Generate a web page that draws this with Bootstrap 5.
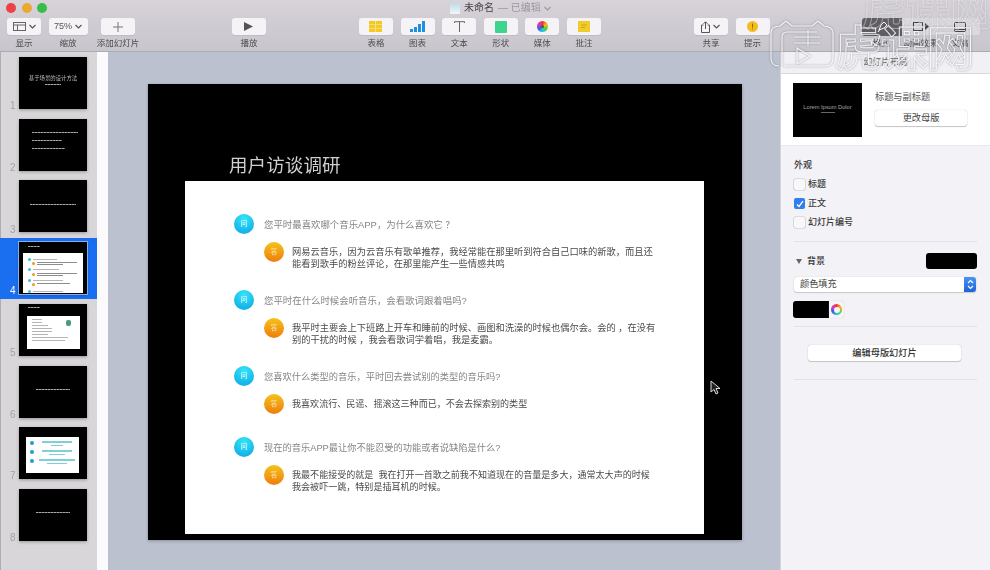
<!doctype html>
<html lang="zh">
<head>
<meta charset="utf-8">
<link href="https://cdn.jsdelivr.net/npm/bootstrap@5.3.0/dist/css/bootstrap.min.css" rel="stylesheet">
<style>
html,body{margin:0;height:570px;overflow:hidden}
body{font-family:"Liberation Sans","Noto Sans CJK SC",sans-serif;background:#bcc1cf;color:#444}
.app-root{width:990px;height:570px;position:relative;overflow:hidden}
.soft{filter:blur(.5px)}
/* toolbar */
.tbar{height:52px;background:linear-gradient(#d8d3d9,#cfcbd2 50%,#c8c6cd);border-bottom:1px solid #adabb2;position:relative}
.tlights{height:18px;padding:3px 0 0 6px;gap:5.5px}
.tl-dot{width:10px;height:10px;border-radius:50%}
.tl-r{background:#ee4049}.tl-y{background:#eaa92e}.tl-g{background:#35bd46}
.wtitle{position:absolute;left:450px;top:1px;font-size:10px;line-height:14px;color:#444;gap:4px}
.wtitle .faint{color:#9a98a0;display:flex;align-items:center;gap:3px}
.doc-ic{width:10px;height:11px;background:linear-gradient(#bcdbe9,#f4f6f7);border-radius:1px}
.tools{padding-left:7px}
.titem{width:34px;display:flex;flex-direction:column;align-items:center;margin-right:7.6px;flex:none}
.tbtn{width:34px;height:17px;background:#f5f3f6;border-radius:3px;box-shadow:0 1px 0 #bfbdc3;display:flex;align-items:center;justify-content:center;gap:3px;font-size:9px;font-weight:500;color:#555}
.tlabel{font-size:8.5px;line-height:12px;margin-top:2px;color:#4c4c4c;white-space:nowrap}
.w39{width:39px}
.m-a{margin-right:13.4px}
.m-b{margin-right:93px}
.sp-play{width:89.4px;flex:none}
.m-c{margin-right:93px}
.m-d{margin-right:92px}
.segwrap{display:flex;height:17px;width:118px;background:#dcdadf;border-radius:3px;flex:none;align-items:center}
.segon{width:40px;height:18px;background:#605e63;border-radius:3px 0 0 3px;display:flex;align-items:center;justify-content:center}
.segoff{width:39px;display:flex;justify-content:center}
.seglabels{display:flex;width:118px;font-size:8.5px;line-height:12px;margin-top:2px;color:#4c4c4c}
.seglabels span{width:40px;text-align:center;white-space:nowrap}
/* body */
.mainrow{height:518px}
.thumbs{width:97px;flex:none;background:#d9d6da;padding-top:.5px;border-left:1px solid #aeadb2}
.strip{width:11px;flex:none;background:#fbfbfd}
.trow{height:61.7px;position:relative;padding:4.6px 0 0 19px;margin-left:-1px}
.trow.sel{background:#1a6ef0}
.tnum{position:absolute;left:10px;bottom:3px;font-size:10px;line-height:10px;color:#a3a2a6}
.sel .tnum{color:#fff}
.mini{width:68px;height:52px;background:#000;box-shadow:0 1px 3px rgba(0,0,0,.3);display:flex;flex-direction:column;overflow:hidden;position:relative}
.sel .mini{outline:1px solid #7fb0f0}
.mini-c{align-items:center;justify-content:center;padding-bottom:6px}
.mini-h{font-size:5.4px;line-height:7px;color:#bbb;white-space:nowrap}
.bar{height:1px;background:repeating-linear-gradient(90deg,#a8a8a8 0 2px,#666 2px 3px);margin-top:2px}
.blk{display:flex;flex-direction:column;gap:7px;padding:13px 0 0 13px}
.w46{width:46px}.w44{width:44px}.w30{width:30px}.w33{width:33px}.w34{width:34px}.w20{width:20px}.w16{width:16px}.w12{width:12px}.w40{width:40px}.w36{width:36px}.w24{width:24px}.w26{width:26px}.w10{width:10px}
.mt0{margin-top:0}
.mini-top{height:11px;padding:4px 0 0 9px}
.mini-top5{height:8px;padding-top:3px}
.mw{background:#fff;margin-left:4px;width:60px;height:40px;padding:4px 3px 0 5px;display:flex;flex-direction:column;gap:1px}
.mq{display:flex;align-items:center;gap:2px;height:4px}
.ma{display:flex;align-items:flex-start;gap:2px;padding-left:4px;height:5px}
.dotb{width:3px;height:3px;border-radius:50%;background:#2dbfe8;flex:none}
.doto{width:3px;height:3px;border-radius:50%;background:#ee9a1e;flex:none}
.lg{height:1px;background:#b5b5b5}
.ld{height:1px;background:#8c8c8c;margin-bottom:1px}
.mw5{background:#fff;margin:4px 0 0 8px;width:53px;height:33px;padding:3px 5px;position:relative;display:flex;flex-direction:column;gap:2px}
.grn{position:absolute;right:9px;top:4px;width:5px;height:6px;border-radius:2px;background:#4a9a82}
.mw7{background:#fff;margin:10px 0 0 7px;width:53px;height:36px;padding:4px 4px;display:flex;flex-direction:column;gap:4px}
.m7r{display:flex;gap:4px}
.m7t{display:flex;flex-direction:column;align-items:center;gap:2px;flex:1}
.lt{height:1.5px;background:#7fd0d6}
.dot7{width:4px;height:4px;border-radius:50%;background:#1e9fd8;flex:none;margin-top:0}
/* canvas */
.stage{flex:1 1 auto;background:#bcc1cf;padding:32px 0 0 40px;position:relative}
.slide{width:594px;height:456px;background:#000;padding-top:97px;position:relative;box-shadow:0 1px 3px rgba(0,0,0,.25)}
.s-title{position:absolute;left:81px;top:69px;font-size:18.5px;line-height:26px;color:#cfcfcf;letter-spacing:.1px}
.s-card{margin-left:37px;width:519px;height:353px;background:#fff;padding-top:33px}
.q-row{display:flex;align-items:center;padding-left:49px;height:20px}
.ic{width:20px;height:20px;border-radius:50%;color:#fff;font-size:7px;display:flex;align-items:center;justify-content:center;flex:none}
.ic-q{background:radial-gradient(circle at 50% 25%,#35e6f4,#14b2ea 75%)}
.ic-a{background:linear-gradient(#f5c21a,#ee7d0c);color:#fbe3a8}
.q-txt{margin-left:10px;padding-top:3px;font-size:9.42px;color:#858585;white-space:nowrap}
.q-nar{font-size:9.26px}
.a-row{display:flex;padding-left:79px;margin-top:8px;height:48px}
.a-row.n2{height:43px}
.a-txt{margin-left:8px;font-size:9.25px;line-height:11.7px;color:#4a4a4a;padding-top:5px;white-space:nowrap}
.a-nar{font-size:9.05px}
/* panel */
.panel{width:210px;flex:none;background:#f3f2f7;border-left:1px solid #d6d5da;font-size:9px;color:#444}
.p-tab{height:22px;border-bottom:1px solid #d9d8dd;background:#f1f0f4;text-align:center;line-height:20px;color:#6a6a6a;font-size:8.8px}
.p-head{height:72px;background:#fff;border-bottom:1px solid #e9e8ec;padding:9px 0 0 12px;gap:13px}
.p-thumb{width:69px;height:54px;background:#000;color:#aaa;display:flex;flex-direction:column;align-items:center;justify-content:center;font-size:5.7px;line-height:8px;flex:none;padding-bottom:5px;white-space:nowrap}
.p-thumb i{display:block;width:14px;height:1px;background:#666;margin-top:1px}
.p-nm{font-size:9.2px;line-height:12px;margin-top:8px;color:#555}
.p-btn{width:92px;height:16px;margin-top:7px;background:#fff;border-radius:3px;box-shadow:0 0 1px #aaa,0 1px 1px #c6c6c6;text-align:center;font-size:9.2px;line-height:16px;color:#444}
.p-sec{padding:13px 13px 0 13px;height:95px}
.p-h{font-weight:500;font-size:9px;line-height:12px;color:#333}
.p-chk{display:flex;align-items:center;gap:3px;height:19px;font-size:9px;font-weight:500;color:#3a3a3a}
.p-h + .p-chk{margin-top:4px}
.cbx{width:11px;height:11px;border-radius:2px;background:#f8f7fa;box-shadow:0 0 0 .6px #c4c3c8;flex:none;display:flex;align-items:center;justify-content:center}
.cbx.on{background:#2f80ec;box-shadow:none}
.p-hr{height:1px;background:#e3e2e7;margin:0 13px}
.p-bgrow{display:flex;align-items:center;justify-content:space-between;height:16px;margin:11px 13px 0 15px}
.tri{width:0;height:0;border-left:3.5px solid transparent;border-right:3.5px solid transparent;border-top:5px solid #666;margin-right:5px}
.sw{width:51px;height:16px;background:#000;border-radius:3px}
.p-sel{display:flex;margin:8px 13px 0 13px;height:15px;width:182px;background:#fff;border-radius:3px;box-shadow:0 0 1px #aaa,0 1px 1px #ccc;justify-content:space-between;line-height:15px;padding-left:6px;font-size:9.2px;color:#444}
.stp{width:12px;height:15px;background:linear-gradient(#4b93f0,#1c63d8);border-radius:0 3px 3px 0;display:flex;align-items:center;justify-content:center}
.p-col{display:flex;margin:9px 0 8px 12px;height:17px}
.col-sw{width:36px;height:17px;background:#000;border-radius:3px 0 0 3px}
.col-w{width:15px;height:17px;background:#f4f3f6;border-radius:0 3px 3px 0;box-shadow:0 0 1px #aaa;display:flex;align-items:center;justify-content:center}
.wheel{width:11px;height:11px;border-radius:50%;background:conic-gradient(#f5303a,#fbb81e,#63c93a,#1ecbd8,#3a5ce8,#d93ac0,#f5303a);display:flex;align-items:center;justify-content:center}
.wheel i{display:block;width:6px;height:6px;border-radius:50%;background:#f4f3f6}
.wheel b{display:block;width:3px;height:3px;border-radius:50%;background:#553}
.p-wide{width:153px;height:16px;margin:18px 0 18px 27px;background:#fff;border-radius:3px;box-shadow:0 0 1px #aaa,0 1px 1px #c6c6c6;text-align:center;line-height:16px;font-size:9.2px;font-weight:500;color:#333}
/* overlays */
.wm-layer{position:absolute;left:0;top:0;width:990px;height:80px;overflow:hidden;pointer-events:none;filter:drop-shadow(0 0 1px rgba(80,80,95,.65))}
.wm{position:absolute;left:835px;top:15px;height:60px;color:transparent;-webkit-text-stroke:1px rgba(255,255,255,.85);font-size:47px;line-height:60px;letter-spacing:-1px;white-space:nowrap;font-family:"Noto Sans CJK SC",sans-serif;font-weight:700}
.wm2{position:absolute;left:862px;top:-24px;color:transparent;-webkit-text-stroke:1px rgba(255,255,255,.4);font-size:44px;line-height:60px;white-space:nowrap;font-family:"Noto Sans CJK SC",sans-serif;font-weight:700}
.wm-logo{position:absolute;left:770px;top:20px}
.cursor{position:absolute;left:710px;top:380px;pointer-events:none}
</style>
</head>
<body>
<div class="app-root">
 <div class="soft">
 <header class="tbar">
  <div class="tlights d-flex"><span class="tl-dot tl-r"></span><span class="tl-dot tl-y"></span><span class="tl-dot tl-g"></span></div>
  <div class="wtitle d-flex align-items-center"><span class="doc-ic"></span><span>未命名</span><span class="faint">— 已编辑 <svg width="7" height="5" viewBox="0 0 7 5"><path d="M.5 1l3 3 3-3" fill="none" stroke="#9a98a0" stroke-width="1.1"/></svg></span></div>
  <div class="tools d-flex">
   <div class="titem"><div class="tbtn"><svg width="13" height="9" viewBox="0 0 13 9"><rect x=".5" y=".5" width="12" height="8" fill="none" stroke="#666"/><path d="M.5 3h12M4.5 3v5.5" stroke="#666"/></svg><svg width="7" height="5" viewBox="0 0 7 5"><path d="M.5 1l3 3 3-3" fill="none" stroke="#555" stroke-width="1.2"/></svg></div><div class="tlabel">显示</div></div>
   <div class="titem w39 m-a"><div class="tbtn w39">75%<svg width="7" height="5" viewBox="0 0 7 5"><path d="M.5 1l3 3 3-3" fill="none" stroke="#555" stroke-width="1.2"/></svg></div><div class="tlabel">缩放</div></div>
   <div class="titem"><div class="tbtn"><svg width="10" height="10" viewBox="0 0 10 10"><path d="M5 0v10M0 5h10" stroke="#777"/></svg></div><div class="tlabel">添加幻灯片</div></div>
   <div class="sp-play"></div>
   <div class="titem m-b"><div class="tbtn"><svg width="9" height="9" viewBox="0 0 9 9"><path d="M0 0l9 4.5L0 9z" fill="#555"/></svg></div><div class="tlabel">播放</div></div>
   <div class="titem"><div class="tbtn"><svg width="13" height="11" viewBox="0 0 13 11"><rect width="13" height="11" fill="#f4c922"/><path d="M0 3.6h13M0 7.3h13M6.5 0v11" stroke="#f6e9a0" stroke-width=".7"/></svg></div><div class="tlabel">表格</div></div>
   <div class="titem"><div class="tbtn"><svg width="15" height="11" viewBox="0 0 15 11"><path d="M0 8h3v3H0zM4 6h3v5H4zM8 3h3v8H8zM12 0h3v11h-3z" fill="#1f8fe0"/></svg></div><div class="tlabel">图表</div></div>
   <div class="titem"><div class="tbtn"><svg width="11" height="11" viewBox="0 0 11 11"><path d="M.5 2V.7h10V2M5.5.7V11" fill="none" stroke="#666"/></svg></div><div class="tlabel">文本</div></div>
   <div class="titem"><div class="tbtn"><svg width="12" height="12" viewBox="0 0 12 12"><rect width="12" height="12" rx="1" fill="#3fd48c"/></svg></div><div class="tlabel">形状</div></div>
   <div class="titem"><div class="tbtn"><span class="wheel"><b></b></span></div><div class="tlabel">媒体</div></div>
   <div class="titem m-c"><div class="tbtn"><svg width="12" height="11" viewBox="0 0 12 11"><rect width="12" height="11" fill="#f0cb2a"/><path d="M3 4h6M3 6.5h4" stroke="#b89a18" stroke-width=".7"/></svg></div><div class="tlabel">批注</div></div>
   <div class="titem"><div class="tbtn"><svg width="9" height="12" viewBox="0 0 9 12"><path d="M2.5 4H.5v7.5h8V4h-2M4.5 8V1M2.5 2.8l2-2 2 2" fill="none" stroke="#555"/></svg><svg width="7" height="5" viewBox="0 0 7 5"><path d="M.5 1l3 3 3-3" fill="none" stroke="#555" stroke-width="1.2"/></svg></div><div class="tlabel">共享</div></div>
   <div class="titem m-d"><div class="tbtn"><svg width="11" height="11" viewBox="0 0 11 11"><circle cx="5.5" cy="5.5" r="5.5" fill="#f2bd1f"/><path d="M5.5 2.5v4M5.5 7.5v1" stroke="#8a6a10"/></svg></div><div class="tlabel">提示</div></div>
   <div>
    <div class="segwrap">
     <div class="segon"><svg width="12" height="12" viewBox="0 0 12 12"><path d="M8 1L5 4 3 9l5-2 3-3zM2 11l2-3" fill="none" stroke="#fff"/></svg></div>
     <div class="segoff"><svg width="16" height="9" viewBox="0 0 16 9"><rect x=".5" y=".5" width="9" height="8" fill="none" stroke="#444"/><path d="M12 1l4 3.500-4 3.500z" fill="#444"/></svg></div>
     <div class="segoff"><svg width="12" height="10" viewBox="0 0 12 10"><rect x=".5" y=".5" width="11" height="9" rx="1" fill="none" stroke="#444"/><path d="M.5 7.500h11" stroke="#444"/></svg></div>
    </div>
    <div class="seglabels"><span>格式</span><span>动画效果</span><span>文稿</span></div>
   </div>
  </div>
 </header>
 <main class="mainrow d-flex">
  <nav class="thumbs">
   <div class="trow"><span class="tnum">1</span><div class="mini mini-c"><div class="mini-h">基于场景的设计方法</div><div class="bar w16"></div></div></div>
   <div class="trow"><span class="tnum">2</span><div class="mini blk"><div class="bar mt0 w46"></div><div class="bar mt0 w30"></div><div class="bar mt0 w33"></div></div></div>
   <div class="trow"><span class="tnum">3</span><div class="mini mini-c"><div class="bar w46"></div></div></div>
   <div class="trow sel"><span class="tnum">4</span><div class="mini">
     <div class="mini-top"><div class="bar mt0 w12"></div></div>
     <div class="mw">
      <div class="mq"><span class="dotb"></span><div class="lg w24"></div></div>
      <div class="ma"><span class="doto"></span><div><div class="ld w40"></div><div class="ld w26"></div></div></div>
      <div class="mq"><span class="dotb"></span><div class="lg w26"></div></div>
      <div class="ma"><span class="doto"></span><div><div class="ld w40"></div><div class="ld w26"></div></div></div>
      <div class="mq"><span class="dotb"></span><div class="lg w30"></div></div>
      <div class="ma"><span class="doto"></span><div><div class="ld w33"></div></div></div>
      <div class="mq"><span class="dotb"></span><div class="lg w30"></div></div>
     </div></div></div>
   <div class="trow"><span class="tnum">5</span><div class="mini">
     <div class="mini-top mini-top5"><div class="bar mt0 w12"></div></div>
     <div class="mw5"><span class="grn"></span>
      <div class="lg w10"></div><div class="lg w10"></div><div class="lg w16"></div><div class="lg w20"></div><div class="lg w20"></div><div class="lg w16"></div><div class="lg w36"></div><div class="lg w33"></div>
     </div></div></div>
   <div class="trow"><span class="tnum">6</span><div class="mini mini-c"><div class="bar w34"></div></div></div>
   <div class="trow"><span class="tnum">7</span><div class="mini">
     <div class="mw7">
      <div class="m7r"><span class="dot7"></span><div class="m7t"><div class="lt w30"></div><div class="lt w12"></div></div></div>
      <div class="m7r"><span class="dot7"></span><div class="m7t"><div class="lt w30"></div><div class="lt w16"></div></div></div>
      <div class="m7r"><span class="dot7"></span><div class="m7t"><div class="lt w36"></div><div class="lt w20"></div></div></div>
     </div></div></div>
   <div class="trow"><span class="tnum">8</span><div class="mini mini-c"><div class="bar w34"></div></div></div>
  </nav>
  <div class="strip"></div>
  <section class="stage">
   <div class="slide">
    <div class="s-title">用户访谈调研</div>
    <div class="s-card">
     <div class="q-row"><span class="ic ic-q">问</span><span class="q-txt">您平时最喜欢哪个音乐APP，为什么喜欢它 ？</span></div>
     <div class="a-row"><span class="ic ic-a">答</span><div class="a-txt">网易云音乐，因为云音乐有歌单推荐，我经常能在那里听到符合自己口味的新歌，而且还<br>能看到歌手的粉丝评论，在那里能产生一些情感共鸣</div></div>
     <div class="q-row"><span class="ic ic-q">问</span><span class="q-txt">您平时在什么时候会听音乐，会看歌词跟着唱吗?</span></div>
     <div class="a-row"><span class="ic ic-a">答</span><div class="a-txt">我平时主要会上下班路上开车和睡前的时候、画图和洗澡的时候也偶尔会。会的 ，在没有<br>别的干扰的时候 ，我会看歌词学着唱，我是麦霸。</div></div>
     <div class="q-row"><span class="ic ic-q">问</span><span class="q-txt q-nar">您喜欢什么类型的音乐，平时回去尝试别的类型的音乐吗?</span></div>
     <div class="a-row n2"><span class="ic ic-a">答</span><div class="a-txt a-nar">我喜欢流行、民谣、摇滚这三种而已，不会去探索别的类型</div></div>
     <div class="q-row"><span class="ic ic-q">问</span><span class="q-txt q-nar">现在的音乐APP最让你不能忍受的功能或者说缺陷是什么?</span></div>
     <div class="a-row"><span class="ic ic-a">答</span><div class="a-txt a-nar">我最不能接受的就是&nbsp; 我在打开一首歌之前我不知道现在的音量是多大，通常太大声的时候<br>我会被吓一跳，特别是插耳机的时候。</div></div>
    </div>
   </div>
  </section>
  <aside class="panel">
   <div class="p-tab">幻灯片布局</div>
   <div class="p-head d-flex">
    <div class="p-thumb">Lorem Ipsum Dolor<i></i></div>
    <div><div class="p-nm">标题与副标题</div><div class="p-btn">更改母版</div></div>
   </div>
   <div class="p-sec">
    <div class="p-h">外观</div>
    <div class="p-chk"><span class="cbx"></span>标题</div>
    <div class="p-chk"><span class="cbx on"><svg width="8" height="8" viewBox="0 0 8 8"><path d="M1 4.500l2 2L7 1.200" fill="none" stroke="#fff" stroke-width="1.300"/></svg></span>正文</div>
    <div class="p-chk"><span class="cbx"></span>幻灯片编号</div>
   </div>
   <div class="p-hr"></div>
   <div class="p-bgrow"><div class="d-flex align-items-center"><span class="tri"></span><span class="p-h">背景</span></div><span class="sw"></span></div>
   <div class="p-sel"><span>颜色填充</span><span class="stp"><svg width="7" height="11" viewBox="0 0 7 11"><path d="M1 4l2.500-2.500L6 4M1 7l2.500 2.500L6 7" fill="none" stroke="#fff" stroke-width="1.100"/></svg></span></div>
   <div class="p-col"><span class="col-sw"></span><span class="col-w"><span class="wheel"><i></i></span></span></div>
   <div class="p-hr"></div>
   <div class="p-wide">编辑母版幻灯片</div>
   <div class="p-hr"></div>
  </aside>
 </main>
 </div>
 <div class="wm-layer">
  <div class="wm2">虎课网</div>
  <svg class="wm-logo" width="66" height="48" viewBox="0 0 66 48" fill="none" stroke="#fff" stroke-opacity=".85" stroke-width="1.100">
   <path d="M9 46C4 46 1 43 1 38V13C1 8 5 6 10 6L16 1l6 5h20l6-5 6 5c5 0 9 3 9 7v25c0 5-3 8-8 8H14"/>
   <path d="M12 46V17c0-3 2-5 5-5h30"/>
   <path d="M24 17h26M24 23h26M38 10v16"/>
   <path d="M27 28l13 8-13 8z"/>
  </svg>
  <div class="wm">虎课网</div>
 </div>
 <svg class="cursor" width="11" height="15" viewBox="0 0 11 15"><path d="M1 1v11l3-2.500 2 4.500 2-1-2-4.500h4z" fill="#222" stroke="#ddd"/></svg>
</div>
</body>
</html>
